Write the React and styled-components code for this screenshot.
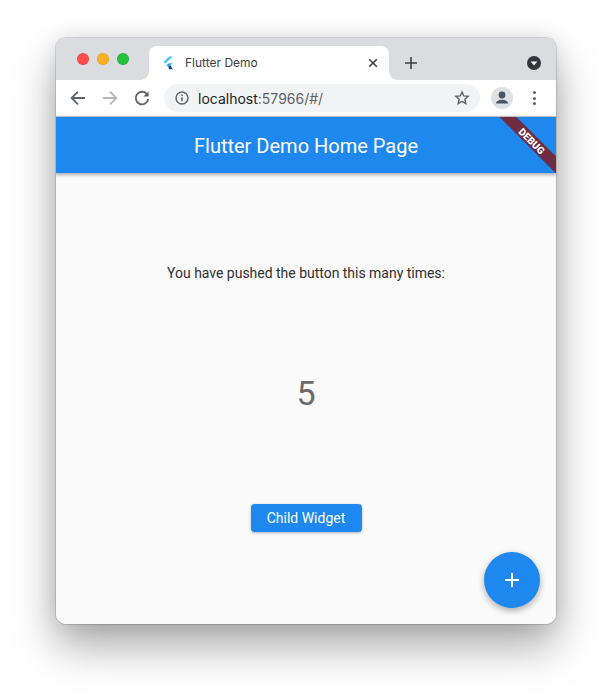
import React from 'react';
import styled, { createGlobalStyle } from 'styled-components';

const GlobalStyle = createGlobalStyle`
  html, body {
    margin: 0;
    padding: 0;
    background: #ffffff;
    overflow: hidden;
  }
  body {
    font-family: Roboto, "Liberation Sans", sans-serif;
  }
`;

const Page = styled.div`
  width: 612px;
  height: 698px;
  padding: 38px 56px 0;
  box-sizing: border-box;
`;

const Window = styled.div`
  width: 500px;
  height: 586px;
  display: flex;
  flex-direction: column;
  border-radius: 10px;
  overflow: hidden;
  background: #fafafa;
  box-shadow: 0 0 0 1px rgba(0, 0, 0, 0.12), 0 22px 44px rgba(0, 0, 0, 0.34),
    0 0 20px rgba(0, 0, 0, 0.1);
`;

const TabStrip = styled.div`
  height: 42px;
  flex: none;
  display: flex;
  align-items: flex-end;
  background: #dadce0;
  padding-right: 14px;
`;

const Lights = styled.div`
  width: 93px;
  height: 42px;
  flex: none;
  display: flex;
  gap: 8px;
  align-items: center;
  padding: 0 0 0 21px;
  box-sizing: border-box;
`;

const Light = styled.span`
  width: 12px;
  height: 12px;
  border-radius: 50%;
  background: ${(p) => p.$color};
  box-shadow: inset 0 0 0 0.5px rgba(0, 0, 0, 0.12);
`;

const Tab = styled.div`
  position: relative;
  width: 240px;
  height: 34px;
  flex: none;
  display: flex;
  align-items: center;
  padding: 0 9px 0 13px;
  box-sizing: border-box;
  background: #ffffff;
  border-radius: 8px 8px 0 0;
  &::before,
  &::after {
    content: '';
    position: absolute;
    bottom: 0;
    width: 8px;
    height: 8px;
  }
  &::before {
    left: -8px;
    background: radial-gradient(circle at 0 0, #dadce0 7.5px, #ffffff 8px);
  }
  &::after {
    right: -8px;
    background: radial-gradient(circle at 100% 0, #dadce0 7.5px, #ffffff 8px);
  }
`;

const TabTitle = styled.span`
  flex: 1;
  margin: 0 0 2px 11px;
  font-family: Inter, Roboto, sans-serif;
  font-size: 12px;
  color: #3c4043;
`;

const NewTab = styled.div`
  width: 14px;
  height: 14px;
  margin: 0 0 10px 15px;
  flex: none;
  display: flex;
`;

const Spacer = styled.div`
  flex: 1;
`;

const MediaButton = styled.div`
  width: 16px;
  height: 16px;
  margin-bottom: 9px;
  flex: none;
  display: flex;
`;

const Toolbar = styled.div`
  height: 36px;
  flex: none;
  display: flex;
  align-items: center;
  background: #ffffff;
  border-bottom: 1px solid #d6d8dc;
  padding-left: 12px;
`;

const NavIcon = styled.div`
  width: 20px;
  height: 20px;
  flex: none;
  margin-right: ${(p) => p.$gap}px;
  display: flex;
`;

const Omnibox = styled.div`
  width: 316px;
  height: 28px;
  flex: none;
  display: flex;
  align-items: center;
  margin-left: 3px;
  padding: 0 10px 0 10px;
  box-sizing: border-box;
  border-radius: 14px;
  background: #f1f3f4;
`;

const Url = styled.span`
  flex: 1;
  margin-left: 8px;
  font-family: Inter, Roboto, sans-serif;
  font-size: 14px;
  color: #202124;
`;

const UrlRest = styled.span`
  color: #5f6368;
`;

const Avatar = styled.div`
  width: 22px;
  height: 22px;
  flex: none;
  margin-left: 11px;
  border-radius: 50%;
  background: #dee1e6;
  display: flex;
  overflow: hidden;
`;

const MenuDots = styled.div`
  width: 4px;
  flex: none;
  margin-left: 19px;
  display: flex;
  flex-direction: column;
  gap: 2.5px;
  align-items: center;
`;

const Dot = styled.span`
  width: 3px;
  height: 3px;
  border-radius: 50%;
  background: #5f6368;
`;

const AppBar = styled.header`
  position: relative;
  z-index: 1;
  height: 56px;
  padding-top: 2px;
  box-sizing: border-box;
  flex: none;
  display: flex;
  align-items: center;
  justify-content: center;
  overflow: hidden;
  background: #1e88ee;
  color: #ffffff;
  font-size: 20px;
  box-shadow: 0 1px 3px 1px rgba(0, 0, 0, 0.3);
`;

// ribbon across the top right corner of the app bar
const DebugBanner = styled.div`
  position: absolute;
  top: 17.5px;
  right: -22.5px;
  width: 94px;
  height: 12px;
  display: flex;
  align-items: center;
  justify-content: center;
  transform: rotate(45deg);
  background: #6f2c43;
  color: #ffffff;
  font-size: 10px;
  font-weight: 900;
  text-shadow: 0 0 1px rgba(0, 0, 0, 0.4);
`;

const Body = styled.main`
  position: relative;
  flex: 1;
  display: flex;
  flex-direction: column;
  align-items: center;
  background: #fafafa;
`;

const Message = styled.div`
  margin-top: 91px;
  font-size: 14px;
  line-height: 18px;
  letter-spacing: -0.02px;
  color: #303030;
`;

const Counter = styled.div`
  margin-top: 90px;
  font-size: 34px;
  line-height: 42px;
  color: #6b6b6b;
`;

const ChildButton = styled.button`
  margin-top: 90px;
  width: 111px;
  height: 28px;
  padding: 0;
  border: 0;
  border-radius: 4px;
  background: #1e88ee;
  color: #ffffff;
  font-family: inherit;
  font-size: 14px;
  font-weight: 400;
  box-shadow: 0 1px 3px rgba(0, 0, 0, 0.3);
`;

const Fab = styled.button`
  position: absolute;
  right: 16px;
  bottom: 16px;
  width: 56px;
  height: 56px;
  padding: 0;
  border: 0;
  border-radius: 50%;
  display: flex;
  align-items: center;
  justify-content: center;
  background: #1e88ee;
  box-shadow: 0 3px 6px rgba(0, 0, 0, 0.22), 0 2px 8px rgba(0, 0, 0, 0.12);
`;

const FlutterLogo = () => (
  <svg width="12" height="14" viewBox="0 0 12 14">
    <path d="M7.2 0.6h3.6L3.3 7.6 1.5 5.9z" fill="#45c6f4" />
    <path d="M7.2 6.9h3.6L6.5 11 4.7 9.3z" fill="#45c6f4" />
    <path d="M4.7 9.3 6.5 7.6 8.3 9.3 6.5 11z" fill="#1f9fe0" />
    <path d="M6.5 11l1.8-1.7 2.5 4H7.2z" fill="#0b3e8f" />
  </svg>
);

const App = () => (
  <>
    <GlobalStyle />
    <Page>
      <Window>
        <TabStrip>
          <Lights>
            <Light $color="#fc4d48" />
            <Light $color="#fdb025" />
            <Light $color="#25c13a" />
          </Lights>
          <Tab>
            <FlutterLogo />
            <TabTitle>Flutter Demo</TabTitle>
            <svg width="14" height="14" viewBox="0 0 14 14">
              <path d="M3.2 3.2l7.6 7.6M10.8 3.2l-7.6 7.6" stroke="#3c4043" strokeWidth="1.6" fill="none" />
            </svg>
          </Tab>
          <NewTab>
            <svg width="14" height="14" viewBox="0 0 14 14">
              <path d="M7 1v12M1 7h12" stroke="#3c4043" strokeWidth="1.6" fill="none" />
            </svg>
          </NewTab>
          <Spacer />
          <MediaButton>
            <svg width="16" height="16" viewBox="0 0 16 16">
              <circle cx="8" cy="8" r="7" fill="#33363a" />
              <path d="M4.6 6.6h6.8L8 10.6z" fill="#eef0f2" />
            </svg>
          </MediaButton>
        </TabStrip>
        <Toolbar>
          <NavIcon $gap={12}>
            <svg width="20" height="20" viewBox="0 0 20 20">
              <path d="M17 10H4M10 3.6 3.6 10l6.4 6.4" stroke="#5f6368" strokeWidth="1.8" fill="none" />
            </svg>
          </NavIcon>
          <NavIcon $gap={12}>
            <svg width="20" height="20" viewBox="0 0 20 20">
              <path d="M3 10h13M10 3.6l6.4 6.4-6.4 6.4" stroke="#b5b7ba" strokeWidth="1.8" fill="none" />
            </svg>
          </NavIcon>
          <NavIcon $gap={9}>
            <svg width="20" height="20" viewBox="0 0 20 20">
              <path d="M15.2 6.4A6.3 6.3 0 1 0 16.3 11" stroke="#5f6368" strokeWidth="1.8" fill="none" />
              <path d="M16.6 3.4v5.2h-5.2z" fill="#5f6368" />
            </svg>
          </NavIcon>
          <Omnibox>
            <svg width="16" height="16" viewBox="0 0 16 16">
              <circle cx="8" cy="8" r="6" stroke="#5f6368" strokeWidth="1.4" fill="none" />
              <path d="M8 7.2v4M8 4.6v1.4" stroke="#5f6368" strokeWidth="1.5" fill="none" />
            </svg>
            <Url>
              localhost<UrlRest>:57966/#/</UrlRest>
            </Url>
            <svg width="16" height="16" viewBox="0 0 16 16">
              <path
                d="M8 1.9l1.75 4.05 4.4.4-3.33 2.9 1 4.3L8 11.3l-3.82 2.25 1-4.3-3.33-2.9 4.4-.4z"
                stroke="#5f6368"
                strokeWidth="1.4"
                fill="none"
              />
            </svg>
          </Omnibox>
          <Avatar>
            <svg width="22" height="22" viewBox="0 0 22 22">
              <circle cx="11" cy="8" r="3.4" fill="#4a5568" />
              <path d="M5 16.5c0-2.6 3.4-3.8 6-3.8s6 1.2 6 3.8z" fill="#4a5568" />
            </svg>
          </Avatar>
          <MenuDots>
            <Dot />
            <Dot />
            <Dot />
          </MenuDots>
        </Toolbar>
        <AppBar>
          Flutter Demo Home Page
          <DebugBanner>DEBUG</DebugBanner>
        </AppBar>
        <Body>
          <Message>You have pushed the button this many times:</Message>
          <Counter>5</Counter>
          <ChildButton>Child Widget</ChildButton>
          <Fab>
            <svg width="18" height="18" viewBox="0 0 18 18">
              <path d="M9 2v14M2 9h14" stroke="#ffffff" strokeWidth="2" fill="none" />
            </svg>
          </Fab>
        </Body>
      </Window>
    </Page>
  </>
);

export default App;
